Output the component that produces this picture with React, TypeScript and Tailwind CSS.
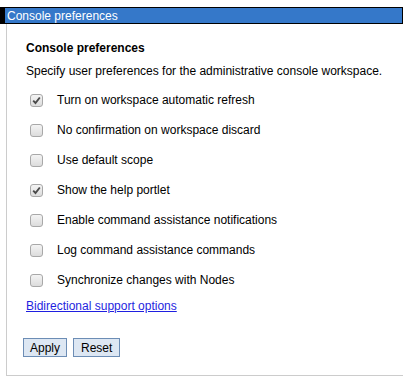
import React from "react";

const OPTIONS: { label: string; checked: boolean }[] = [
  { label: "Turn on workspace automatic refresh", checked: true },
  { label: "No confirmation on workspace discard", checked: false },
  { label: "Use default scope", checked: false },
  { label: "Show the help portlet", checked: true },
  { label: "Enable command assistance notifications", checked: false },
  { label: "Log command assistance commands", checked: false },
  { label: "Synchronize changes with Nodes", checked: false },
];

function Box({ checked }: { checked: boolean }) {
  return (
    <span className="flex h-[13px] w-[13px] shrink-0 items-center justify-center rounded-[3px] border border-[#a8a8a8] bg-gradient-to-b from-[#f4f4f4] to-[#dcdcdc]">
      {checked && (
        <svg width="9" height="9" viewBox="0 0 9 9">
          <path d="M1.2 4.6 L3.5 7 L7.8 1.5" fill="none" stroke="#4a4a4a" strokeWidth="1.9" />
        </svg>
      )}
    </span>
  );
}

export default function App() {
  return (
    <div className="h-[385px] w-[403px] overflow-hidden bg-white pt-[7px] font-['Liberation_Sans',Arial,sans-serif] text-[12px] text-black">
      {/* title bar */}
      <div className="flex h-[17px] items-center border-y border-r border-black border-l-[5px] bg-[#3578c9] pl-[2px] text-[12px] leading-none text-white">
        Console preferences
      </div>

      {/* panel */}
      <div className="ml-[6px] h-[352px] border-b border-l border-[#cccccc] pl-[19px] pt-[16px]">
        <h2 className="text-[12px] font-bold leading-[16px]">Console preferences</h2>
        <p className="mt-[7px] leading-[16px]">
          Specify user preferences for the administrative console workspace.
        </p>

        <div className="mt-[6px] flex flex-col">
          {OPTIONS.map((o) => (
            <label key={o.label} className="flex h-[30px] items-center">
              <span className="ml-[4px]">
                <Box checked={o.checked} />
              </span>
              <span className="ml-[14px]">{o.label}</span>
            </label>
          ))}
        </div>

        <a href="#" className="mt-[3px] block leading-[16px] text-[#1f1fe0] underline">
          Bidirectional support options
        </a>

        <div className="mt-[24px] ml-[-3px] flex gap-[6px]">
          <button className="h-[19px] border border-[#6c8db5] bg-[#dde7f3] px-[6px] text-[12px] leading-none">
            Apply
          </button>
          <button className="h-[19px] border border-[#6c8db5] bg-[#dde7f3] px-[7px] text-[12px] leading-none">
            Reset
          </button>
        </div>
      </div>
    </div>
  );
}
